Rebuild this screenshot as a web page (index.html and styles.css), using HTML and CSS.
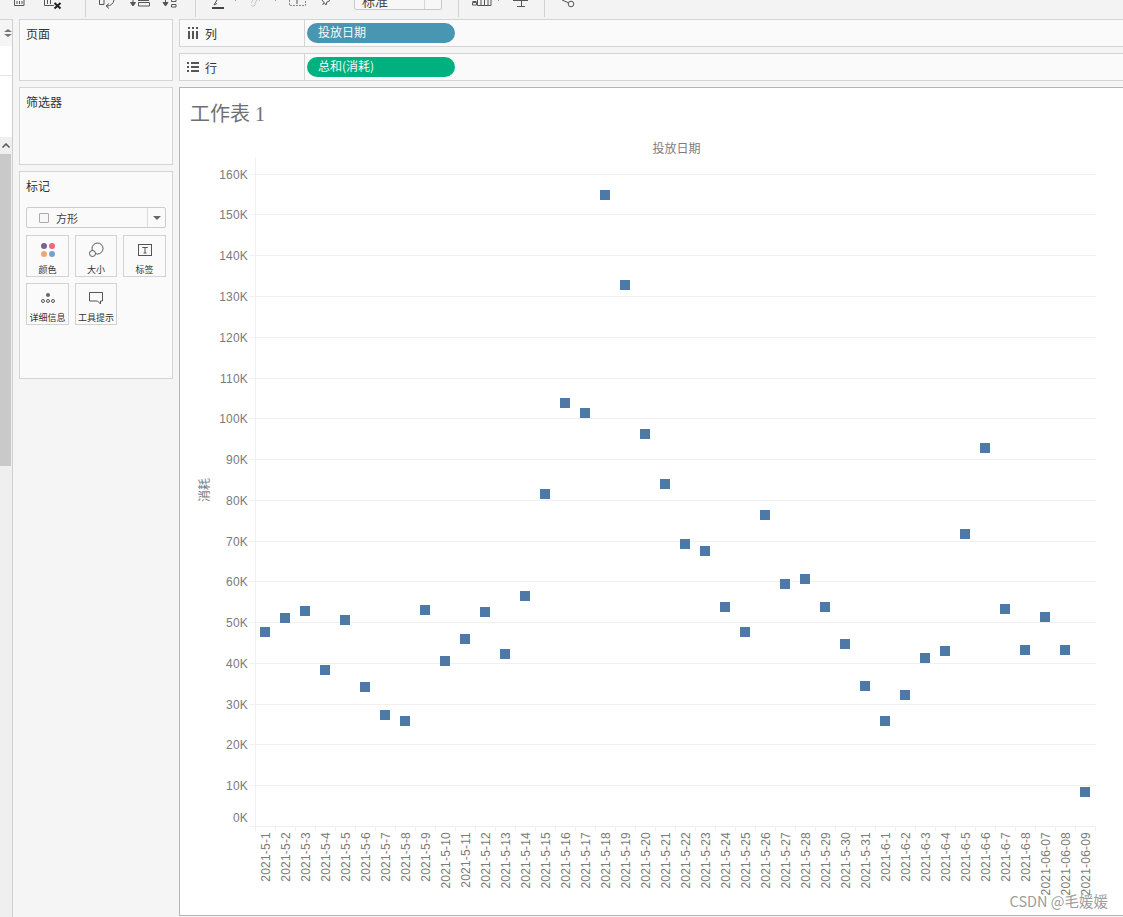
FILE: index.html
```html
<!DOCTYPE html>
<html lang="zh-CN">
<head>
<meta charset="utf-8">
<title>工作表 1</title>
<link rel="stylesheet" href="styles.css">
</head>
<body>
<div class="toolbar">
  <svg class="tb-strip" width="354" height="19" viewBox="0 0 354 19">
    <g class="tb-ico">
      <path d="M14.500 0v5.500h9.500V0M17 1v3M19.500 1v3M22 1v3"/>
      <path d="M44.500 0v5.500H54M47.500 0v4M50.500 0v4"/>
      <path class="tb-x" d="M54.500 3l6 5.500M60.500 3l-6 5.500"/>
      <path d="M99.500 0v4.500h4.500V0"/>
      <path d="M114 0a7 7 0 0 1-7 6M109 3.500L106 6l3 2.500"/>
      <path class="tb-fill" d="M133 0v3M130.500 2.500h5L133 6z"/>
      <path d="M138.500 2.500h11V6h-11zM138 0.500h11"/>
      <path class="tb-fill" d="M165.500 0v3M163 2.500h5L165.500 6z"/>
      <path d="M171.500 0v1.500h4.500V0M171.500 4.500h4.500v2.500h-4.500z"/>
    </g>
    <path class="tb-sep" d="M85.500 0v17M195.500 0v17"/>
    <g class="tb-ico">
      <path class="tb-dark" d="M212 8h12"/>
      <path d="M214 5l3-5M214 5l3-1.500"/>
      <path class="tb-light" d="M251 3l2-3M257 0l-2 3a2 2 0 0 1-4 2M260 0l-1 1"/>
      <path class="tb-dash" d="M289.500 0v5.500h16V0"/>
      <path d="M297 0v4"/>
      <path d="M322 0l4 5 1-3 3-1.500M324 3l-1.500 2"/>
      <path class="tb-tick" d="M235.500 0v1M275.500 0v1"/>
    </g>
  </svg>
  <div class="tb-select"><span class="tb-select-text">标准</span><span class="tb-select-btn"></span></div>
  <svg class="tb-strip" width="300" height="19" viewBox="442 0 300 19">
    <path class="tb-sep" d="M458.500 0v17M544.500 0v17"/>
    <g class="tb-ico">
      <path d="M472.500 1.500h4M472.500 2.500h4v2.500h-4z"/>
      <path d="M477.500 0v5.500h13.500V0M481 0v5M484.500 0v5M488 0v5"/>
      <path class="tb-tick" d="M498.500 0v1"/>
      <path d="M513 0.500h15M521.500 1v5.500M517 6.500h8"/>
      <circle cx="571" cy="4" r="2.800"/>
      <path d="M562 0l6.500 2.800"/>
    </g>
  </svg>
</div>

<div class="workspace">
  <aside class="rail">
    <div class="rail-head"><svg width="8" height="10" viewBox="0 0 8 10"><path class="rail-arrows" d="M0 4l4-3 4 3zM0 6l4 3 4-3z"/></svg></div>
    <div class="rail-row"></div>
    <div class="rail-list"></div>
    <div class="rail-scroll">
      <div class="rail-up"><svg width="8" height="5" viewBox="0 0 8 5"><path class="rail-caret" d="M0.500 4.500L4 1l3.500 3.500"/></svg></div>
      <div class="rail-thumb"></div>
    </div>
  </aside>

  <div class="cards">
    <section class="card card-pages"><h2 class="card-title">页面</h2></section>
    <section class="card card-filters"><h2 class="card-title">筛选器</h2></section>
    <section class="card card-marks">
      <h2 class="card-title">标记</h2>
      <div class="mark-select">
        <span class="mark-square"></span><span class="mark-type">方形</span>
        <span class="mark-arrow"><svg width="8" height="4" viewBox="0 0 8 4"><path class="caret" d="M0 0h8L4 4z"/></svg></span>
      </div>
      <div class="mark-grid">
        <div class="mark-btn">
          <svg class="mark-ico" width="20" height="18" viewBox="0 0 20 18"><circle cx="6" cy="5" r="3" fill="#75628f"/><circle cx="14" cy="5" r="3" fill="#f0667f"/><circle cx="6" cy="13" r="3" fill="#f2a577"/><circle cx="14" cy="13" r="3" fill="#76a0d0"/></svg>
          <span>颜色</span>
        </div>
        <div class="mark-btn">
          <svg class="mark-ico" width="20" height="18" viewBox="0 0 20 18"><circle class="ico-line" cx="11.500" cy="7.500" r="5.500"/><circle class="ico-fill" cx="6.500" cy="12.500" r="3"/></svg>
          <span>大小</span>
        </div>
        <div class="mark-btn">
          <svg class="mark-ico" width="20" height="18" viewBox="0 0 20 18"><rect class="ico-line" x="3.500" y="3.500" width="13" height="11"/><path class="ico-line" d="M7.500 7V6.500h5V7M10 6.500v5.500M8.500 12h3"/></svg>
          <span>标签</span>
        </div>
        <div class="mark-btn">
          <svg class="mark-ico" width="20" height="18" viewBox="0 0 20 18"><circle cx="10" cy="6" r="2" fill="#666"/><circle class="ico-line" cx="5" cy="12" r="1.500"/><circle class="ico-line" cx="10" cy="12" r="1.500"/><circle class="ico-line" cx="15" cy="12" r="1.500"/></svg>
          <span>详细信息</span>
        </div>
        <div class="mark-btn">
          <svg class="mark-ico" width="20" height="18" viewBox="0 0 20 18"><path class="ico-line" d="M3.500 3.500h13v8.500h-2v3l-3-3h-8z"/></svg>
          <span>工具提示</span>
        </div>
      </div>
    </section>
  </div>

  <main class="main">
    <div class="shelf">
      <div class="shelf-label">
        <svg width="12" height="12" viewBox="0 0 12 12"><path class="shelf-ico" d="M2 0v2M2 4v8M6 0v2M6 4v8M10 0v2M10 4v8"/></svg>
        <span>列</span>
      </div>
      <div class="shelf-body"><span class="pill pill-blue">投放日期</span></div>
    </div>
    <div class="shelf">
      <div class="shelf-label">
        <svg width="12" height="12" viewBox="0 0 12 12"><path class="shelf-ico" d="M0 2h2M4 2h8M0 6h2M4 6h8M0 10h2M4 10h8"/></svg>
        <span>行</span>
      </div>
      <div class="shelf-body"><span class="pill pill-green">总和(消耗)</span></div>
    </div>
    <section class="sheet">
      <h1 class="sheet-title">工作表 1</h1>
      <svg class="chart" width="943" height="780" viewBox="180 135 943 780">
        <g class="grid">
          <path d="M249 174.500H1096M249 214.500H1096M249 255.500H1096M249 296.500H1096M249 337.500H1096M249 378.500H1096M249 418.500H1096M249 459.500H1096M249 500.500H1096M249 541.500H1096M249 581.500H1096M249 622.500H1096M249 663.500H1096M249 704.500H1096M249 744.500H1096M249 785.500H1096"/>
          <path d="M255.500 158V831M250 826.500H1096"/>
          <path d="M275.500 827v4M295.500 827v4M315.500 827v4M335.500 827v4M355.500 827v4M375.500 827v4M395.500 827v4M415.500 827v4M435.500 827v4M455.500 827v4M475.500 827v4M495.500 827v4M515.500 827v4M535.500 827v4M555.500 827v4M575.500 827v4M595.500 827v4M615.500 827v4M635.500 827v4M655.500 827v4M675.500 827v4M695.500 827v4M715.500 827v4M735.500 827v4M755.500 827v4M775.500 827v4M795.500 827v4M815.500 827v4M835.500 827v4M855.500 827v4M875.500 827v4M895.500 827v4M915.500 827v4M935.500 827v4M955.500 827v4M975.500 827v4M995.500 827v4M1015.500 827v4M1035.500 827v4M1055.500 827v4M1075.500 827v4M1095.500 827v4"/>
        </g>
        <text class="axis-title" x="676.500" y="152.500" text-anchor="middle">投放日期</text>
        <text class="axis-title" transform="translate(209,490) rotate(-90)" text-anchor="middle">消耗</text>
        <g class="y-labels" text-anchor="end">
          <text x="248" y="178.500">160K</text><text x="248" y="218.500">150K</text><text x="248" y="259.500">140K</text><text x="248" y="300.500">130K</text><text x="248" y="341.500">120K</text><text x="248" y="382.500">110K</text><text x="248" y="422.500">100K</text><text x="248" y="463.500">90K</text><text x="248" y="504.500">80K</text><text x="248" y="545.500">70K</text><text x="248" y="585.500">60K</text><text x="248" y="626.500">50K</text><text x="248" y="667.500">40K</text><text x="248" y="708.500">30K</text><text x="248" y="748.500">20K</text><text x="248" y="789.500">10K</text><text x="248" y="821.500">0K</text>
        </g>
        <g class="marks">
          <rect x="260" y="627" width="10" height="10"/><rect x="280" y="613" width="10" height="10"/><rect x="300" y="606" width="10" height="10"/><rect x="320" y="665" width="10" height="10"/><rect x="340" y="615" width="10" height="10"/><rect x="360" y="682" width="10" height="10"/><rect x="380" y="710" width="10" height="10"/><rect x="400" y="716" width="10" height="10"/><rect x="420" y="605" width="10" height="10"/><rect x="440" y="656" width="10" height="10"/><rect x="460" y="634" width="10" height="10"/><rect x="480" y="607" width="10" height="10"/><rect x="500" y="649" width="10" height="10"/><rect x="520" y="591" width="10" height="10"/><rect x="540" y="489" width="10" height="10"/><rect x="560" y="398" width="10" height="10"/><rect x="580" y="408" width="10" height="10"/><rect x="600" y="190" width="10" height="10"/><rect x="620" y="280" width="10" height="10"/><rect x="640" y="429" width="10" height="10"/><rect x="660" y="479" width="10" height="10"/><rect x="680" y="539" width="10" height="10"/><rect x="700" y="546" width="10" height="10"/><rect x="720" y="602" width="10" height="10"/><rect x="740" y="627" width="10" height="10"/><rect x="760" y="510" width="10" height="10"/><rect x="780" y="579" width="10" height="10"/><rect x="800" y="574" width="10" height="10"/><rect x="820" y="602" width="10" height="10"/><rect x="840" y="639" width="10" height="10"/><rect x="860" y="681" width="10" height="10"/><rect x="880" y="716" width="10" height="10"/><rect x="900" y="690" width="10" height="10"/><rect x="920" y="653" width="10" height="10"/><rect x="940" y="646" width="10" height="10"/><rect x="960" y="529" width="10" height="10"/><rect x="980" y="443" width="10" height="10"/><rect x="1000" y="604" width="10" height="10"/><rect x="1020" y="645" width="10" height="10"/><rect x="1040" y="612" width="10" height="10"/><rect x="1060" y="645" width="10" height="10"/><rect x="1080" y="787" width="10" height="10"/>
        </g>
        <g class="x-labels" text-anchor="end">
          <text transform="translate(270,832) rotate(-90)">2021-5-1</text>
          <text transform="translate(290,832) rotate(-90)">2021-5-2</text>
          <text transform="translate(310,832) rotate(-90)">2021-5-3</text>
          <text transform="translate(330,832) rotate(-90)">2021-5-4</text>
          <text transform="translate(350,832) rotate(-90)">2021-5-5</text>
          <text transform="translate(370,832) rotate(-90)">2021-5-6</text>
          <text transform="translate(390,832) rotate(-90)">2021-5-7</text>
          <text transform="translate(410,832) rotate(-90)">2021-5-8</text>
          <text transform="translate(430,832) rotate(-90)">2021-5-9</text>
          <text transform="translate(450,832) rotate(-90)">2021-5-10</text>
          <text transform="translate(470,832) rotate(-90)">2021-5-11</text>
          <text transform="translate(490,832) rotate(-90)">2021-5-12</text>
          <text transform="translate(510,832) rotate(-90)">2021-5-13</text>
          <text transform="translate(530,832) rotate(-90)">2021-5-14</text>
          <text transform="translate(550,832) rotate(-90)">2021-5-15</text>
          <text transform="translate(570,832) rotate(-90)">2021-5-16</text>
          <text transform="translate(590,832) rotate(-90)">2021-5-17</text>
          <text transform="translate(610,832) rotate(-90)">2021-5-18</text>
          <text transform="translate(630,832) rotate(-90)">2021-5-19</text>
          <text transform="translate(650,832) rotate(-90)">2021-5-20</text>
          <text transform="translate(670,832) rotate(-90)">2021-5-21</text>
          <text transform="translate(690,832) rotate(-90)">2021-5-22</text>
          <text transform="translate(710,832) rotate(-90)">2021-5-23</text>
          <text transform="translate(730,832) rotate(-90)">2021-5-24</text>
          <text transform="translate(750,832) rotate(-90)">2021-5-25</text>
          <text transform="translate(770,832) rotate(-90)">2021-5-26</text>
          <text transform="translate(790,832) rotate(-90)">2021-5-27</text>
          <text transform="translate(810,832) rotate(-90)">2021-5-28</text>
          <text transform="translate(830,832) rotate(-90)">2021-5-29</text>
          <text transform="translate(850,832) rotate(-90)">2021-5-30</text>
          <text transform="translate(870,832) rotate(-90)">2021-5-31</text>
          <text transform="translate(890,832) rotate(-90)">2021-6-1</text>
          <text transform="translate(910,832) rotate(-90)">2021-6-2</text>
          <text transform="translate(930,832) rotate(-90)">2021-6-3</text>
          <text transform="translate(950,832) rotate(-90)">2021-6-4</text>
          <text transform="translate(970,832) rotate(-90)">2021-6-5</text>
          <text transform="translate(990,832) rotate(-90)">2021-6-6</text>
          <text transform="translate(1010,832) rotate(-90)">2021-6-7</text>
          <text transform="translate(1030,832) rotate(-90)">2021-6-8</text>
          <text transform="translate(1050,832) rotate(-90)">2021-06-07</text>
          <text transform="translate(1070,832) rotate(-90)">2021-06-08</text>
          <text transform="translate(1090,832) rotate(-90)">2021-06-09</text>
        </g>
      </svg>
    </section>
  </main>
</div>
<div class="watermark">CSDN @毛媛媛</div>
</body>
</html>
```
FILE: styles.css
```css
* { box-sizing: border-box; }
html, body { margin: 0; padding: 0; }
body {
  position: relative;
  width: 1123px;
  height: 917px;
  overflow: hidden;
  background: #f5f5f5;
  color: #333;
  font-family: "Noto Sans CJK SC", "Liberation Sans", sans-serif;
  font-size: 12px;
}

/* Toolbar */
.toolbar { display: flex; height: 19px; overflow: hidden; background: #f3f3f3; }
.tb-strip { display: block; flex: none; }
.tb-ico { fill: none; stroke: #555; stroke-width: 1; }
.tb-fill { fill: #555; stroke: #555; }
.tb-x { stroke: #222; stroke-width: 2; }
.tb-dark { stroke: #444; stroke-width: 2; }
.tb-light { stroke: #c4c4c4; }
.tb-dash { stroke: #888; stroke-dasharray: 2 1; }
.tb-tick { stroke: #999; }
.tb-sep { fill: none; stroke: #d2d2d2; }
.tb-select {
  display: flex;
  flex: none;
  justify-content: space-between;
  width: 88px;
  height: 18px;
  margin-top: -8px;
  border: 1px solid #c8c8c8;
  border-radius: 2px;
  background: #f7f7f7;
}
.tb-select-text { padding-left: 7px; line-height: 15px; font-size: 13px; color: #444; }
.tb-select-btn { width: 17px; border-left: 1px solid #d8d8d8; }

/* Layout */
.workspace { display: flex; height: 898px; }

/* Left rail */
.rail { display: flex; flex: none; flex-direction: column; width: 13px; border-right: 1px solid #cfcfcf; }
.rail-head {
  display: flex;
  flex: none;
  align-items: center;
  justify-content: flex-end;
  height: 27px;
  padding-right: 0;
  border-top: 1px solid #d4d4d4;
  background: #f5f5f5;
}
.rail-arrows { fill: #777; }
.rail-row { flex: none; height: 30px; border-bottom: 1px solid #e6e6e6; background: #fff; }
.rail-list { flex: none; height: 61px; background: #fff; }
.rail-scroll { flex: 1; background: #efefef; }
.rail-up { display: flex; align-items: center; justify-content: center; height: 17px; width: 11px; }
.rail-up svg { display: block; }
.rail-caret { fill: none; stroke: #555; stroke-width: 1.500; }
.rail-thumb { width: 11px; height: 312px; background: #c9c9c9; }

/* Cards column */
.cards { display: flex; flex: none; flex-direction: column; gap: 6px; width: 154px; margin-left: 6px; }
.card { border: 1px solid #d4d4d4; background: #fafafa; padding: 5px 6px 6px; }
.card-pages { height: 62px; }
.card-filters { height: 78px; }
.card-marks { height: 208px; }
.card-title { margin: 0; font-size: 12px; font-weight: 400; line-height: 17px; color: #333; }

.mark-select {
  display: flex;
  align-items: center;
  height: 21px;
  margin-top: 13px;
  border: 1px solid #ccc;
  border-radius: 2px;
  background: #fafafa;
}
.mark-square { width: 10px; height: 10px; margin-left: 12px; border: 1px solid #aaa; border-radius: 1px; background: #f7f7f7; }
.mark-type { margin-left: 7px; font-size: 11px; color: #444; }
.mark-arrow { display: flex; align-items: center; justify-content: center; width: 18px; height: 100%; margin-left: auto; border-left: 1px solid #ddd; }
.mark-arrow svg { display: block; }
.caret { fill: #666; }

.mark-grid { display: grid; grid-template-columns: 43px 42px 43px; grid-auto-rows: 42px; gap: 6px; margin-top: 7px; }
.mark-btn {
  display: flex;
  flex-direction: column;
  align-items: center;
  border: 1px solid #d2d2d2;
  background: #fafafa;
  font-size: 9px;
  line-height: 12px;
  color: #333;
  white-space: nowrap;
}
.mark-ico { display: block; flex: none; margin-top: 5px; margin-bottom: 5px; }
.ico-line { fill: none; stroke: #555; stroke-width: 1; }
.ico-fill { fill: #fafafa; stroke: #555; stroke-width: 1; }

/* Shelves + sheet */
.main { display: flex; flex: 1; flex-direction: column; gap: 6px; min-width: 0; margin-left: 6px; }
.shelf { display: flex; flex: none; height: 28px; border: 1px solid #d4d4d4; border-right: 0; background: #fafafa; }
.shelf-label {
  display: flex;
  flex: none;
  align-items: center;
  gap: 6px;
  width: 125px;
  padding-left: 7px;
  border-right: 1px solid #d4d4d4;
  font-size: 12px;
  color: #333;
}
.shelf-ico { fill: none; stroke: #555; stroke-width: 2; }
.shelf-body { display: flex; align-items: center; padding-left: 2px; }
.pill {
  display: block;
  width: 148px;
  height: 20px;
  padding-left: 11px;
  border-radius: 10px;
  color: #f4f8fa;
  font-size: 12px;
  line-height: 18px;
}
.pill-blue { background: #4996b2; }
.pill-green { background: #00b180; }

.sheet { flex: none; height: 829px; border: 1px solid #b4b4b4; border-right: 0; background: #fff; }
.sheet-title {
  height: 47px;
  margin: 0;
  padding: 12px 0 0 10px;
  font-family: "Liberation Serif", "Noto Sans CJK SC", serif;
  font-size: 20px;
  font-weight: 400;
  line-height: 28px;
  color: #707070;
}
.chart { display: block; }
.grid path { fill: none; stroke: #f0f0f0; stroke-width: 1; }
.axis-title { font-size: 12px; fill: #7d7d7d; }
.y-labels text, .x-labels text { font-family: "Liberation Sans", sans-serif; font-size: 12px; letter-spacing: 0.2px; fill: #7b7b7b; }
.marks rect { fill: #4e79a7; }

.watermark {
  position: absolute;
  right: 15px;
  bottom: 8px;
  font-size: 14.500px;
  line-height: 17px;
  color: rgba(130, 130, 130, 0.8);
}
```
